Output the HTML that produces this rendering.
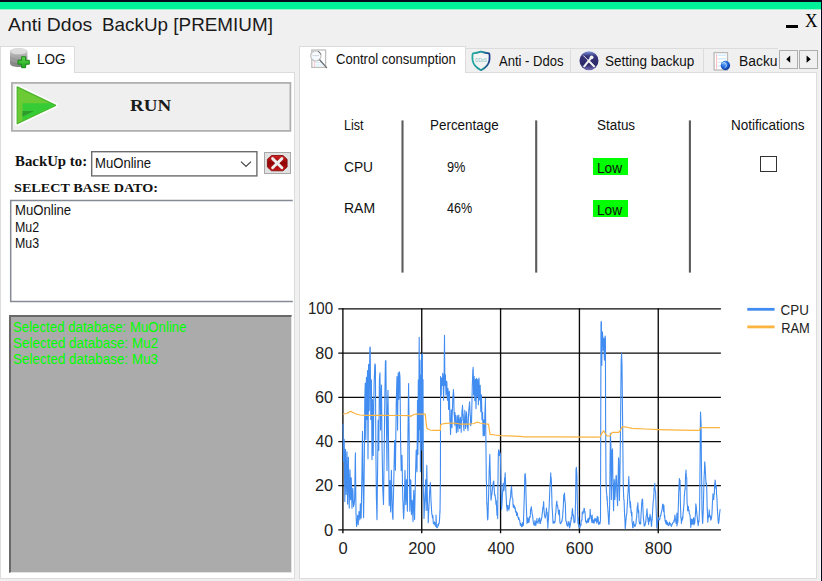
<!DOCTYPE html>
<html><head><meta charset="utf-8"><title>Anti Ddos BackUp [PREMIUM]</title>
<style>
html,body{margin:0;padding:0}
body{width:822px;height:581px;overflow:hidden;background:#f0f0f0;position:relative;font-family:"Liberation Sans",sans-serif}
.a{position:absolute;box-sizing:border-box}
.t{position:absolute;white-space:pre}
svg{position:absolute;overflow:visible}
</style></head><body>

<div class="a" style="left:0;top:0;width:822px;height:2px;background:#06061c"></div>
<div class="a" style="left:0;top:2px;width:821px;height:7px;background:#00f298"></div>
<div class="a" style="left:0;top:9px;width:821px;height:1px;background:#9df2d0"></div>
<div class="a" style="left:0;top:10px;width:821px;height:1px;background:#f5f0f1"></div>
<div class="a" style="left:820px;top:10px;width:1px;height:571px;background:#f9f9f9"></div>
<div class="a" style="left:821px;top:0;width:1px;height:581px;background:#06061c"></div>
<div class="t" style="left:7.56px;top:15.42px;font:normal 19px/1 'Liberation Sans',sans-serif;color:#1a1a1a;transform-origin:0 0;transform:scaleX(1.0215);">Anti Ddos</div>
<div class="t" style="left:101.85px;top:15.42px;font:normal 19px/1 'Liberation Sans',sans-serif;color:#1a1a1a;transform-origin:0 0;transform:scaleX(0.9930);">BackUp [PREMIUM]</div>
<div class="a" style="left:786px;top:24.6px;width:12px;height:3.2px;background:#000"></div>
<div class="t" style="left:805.02px;top:12.11px;font:normal 18.5px/1 'Liberation Serif',serif;color:#000;transform-origin:0 0;transform:scaleX(0.9352);">X</div>
<div class="a" style="left:0;top:72px;width:295px;height:507px;background:#fff;border:1px solid #dcdcdc"></div>
<div class="a" style="left:0;top:46px;width:75px;height:27px;background:#fff;border:1px solid #dcdcdc;border-bottom:none"></div>
<svg style="left:8px;top:46px" width="24" height="24" viewBox="8 46 24 24">
<defs><linearGradient id="dbg" x1="0" y1="0" x2="0" y2="1"><stop offset="0" stop-color="#d6d6d6"/><stop offset="0.4" stop-color="#adadad"/><stop offset="1" stop-color="#808080"/></linearGradient>
<linearGradient id="plg" x1="0" y1="0" x2="0" y2="1"><stop offset="0" stop-color="#5fd44a"/><stop offset="1" stop-color="#1fa81f"/></linearGradient></defs>
<path d="M10 51.5 C10 46.8 27.4 46.8 27.4 51.5 L27.4 63.5 C27.4 68.2 10 68.2 10 63.5 Z" fill="url(#dbg)"/>
<ellipse cx="18.7" cy="51.3" rx="8.1" ry="3" fill="#e2e2e2" opacity=".85"/>
<path d="M10 57 C12 60.5 25 60.5 27.4 57" fill="none" stroke="#8f8f8f" stroke-width="1" opacity=".7"/>
<path d="M10 61.3 C12 64.8 25 64.8 27.4 61.3" fill="none" stroke="#7c7c7c" stroke-width="1" opacity=".7"/>
<path d="M21.6 56.7 h4 v3.6 h3.7 v3.9 h-3.7 v3.5 h-4 v-3.5 h-3.6 v-3.9 h3.6 Z" fill="url(#plg)" stroke="#1c8a1c" stroke-width="1" stroke-linejoin="round"/>
</svg>
<div class="t" style="left:37.39px;top:52.15px;font:normal 14px/1 'Liberation Sans',sans-serif;color:#111;transform-origin:0 0;transform:scaleX(0.9682);">LOG</div>
<svg style="left:9px;top:80px" width="285" height="54" viewBox="9 80 285 54"><rect x="11.9" y="82.9" width="278.5" height="48" fill="#efefef" stroke="#adadad" stroke-width="1.7"/></svg>
<svg style="left:12px;top:83px" width="50" height="46" viewBox="12 83 50 46">
<path d="M17.2 86.9 L55.7 105.4 L17.2 123.8 Z" fill="none" stroke="#fff" stroke-width="4.5" stroke-linejoin="round"/>
<path d="M17.2 86.9 L55.7 105.4 L17.2 123.8 Z" fill="#6ccb35" stroke="#4bb42c" stroke-width="1.2" stroke-linejoin="round"/>
<path d="M22.5 103.2 L51 103.2 L55 105.4 L22.5 120.5 Z" fill="#36cc36"/>
<path d="M22.5 111 L34 111 L22.5 116.8 Z" fill="#2d9c2d"/>
</svg>
<div class="t" style="left:129.68px;top:97.34px;font:bold 17.5px/1 'Liberation Serif',serif;color:#1a1a1a;transform-origin:0 0;transform:scaleX(1.0861);">RUN</div>
<div class="t" style="left:14.55px;top:153.86px;font:bold 14.5px/1 'Liberation Serif',serif;color:#111;transform-origin:0 0;transform:scaleX(1.0225);">BackUp to:</div>
<svg style="left:89px;top:149px" width="171" height="30" viewBox="89 149 171 30"><rect x="91.7" y="151.7" width="165.2" height="24.2" fill="#fff" stroke="#6c6c6c" stroke-width="1.4"/></svg>
<div class="t" style="left:94.63px;top:155.55px;font:normal 14px/1 'Liberation Sans',sans-serif;color:#111;transform-origin:0 0;transform:scaleX(0.9354);">MuOnline</div>
<svg style="left:238px;top:158px" width="16" height="12" viewBox="238 158 16 12"><path d="M241 161.6 L246 166.4 L251 161.6" fill="none" stroke="#4a4a4a" stroke-width="1.3"/></svg>
<div class="a" style="left:264px;top:152.3px;width:27px;height:21.6px;background:#e1e1e1;border:1.2px solid #a8a8a8"></div>
<svg style="left:266px;top:154px" width="23" height="18" viewBox="266 154 23 18">
<defs><linearGradient id="rdg" x1="0" y1="0" x2="0" y2="1"><stop offset="0" stop-color="#d42222"/><stop offset="0.5" stop-color="#8e0404"/><stop offset="1" stop-color="#c81616"/></linearGradient></defs>
<path d="M271.5 155.5 H283 L287.1 159.3 V167 L283 170.8 H271.5 L267.4 167 V159.3 Z" fill="url(#rdg)" stroke="#7a0606" stroke-width=".8"/>
<path d="M272.6 158.6 L281.9 167.7 M281.9 158.6 L272.6 167.7" stroke="#ededed" stroke-width="2.9" stroke-linecap="round"/>
</svg>
<div class="t" style="left:14.05px;top:181.08px;font:bold 13.4px/1 'Liberation Serif',serif;color:#111;transform-origin:0 0;transform:scaleX(1.0575);">SELECT BASE DATO:</div>
<svg style="left:8px;top:198px" width="286" height="106" viewBox="8 198 286 106"><path d="M292.8 200.4 H10.7 V301.5 H292.8" fill="none" stroke="#858b94" stroke-width="1.5"/></svg>
<div class="t" style="left:14.52px;top:203.35px;font:normal 14px/1 'Liberation Sans',sans-serif;color:#111;transform-origin:0 0;transform:scaleX(0.9371);">MuOnline</div>
<div class="t" style="left:14.58px;top:219.65px;font:normal 14px/1 'Liberation Sans',sans-serif;color:#111;transform-origin:0 0;transform:scaleX(0.8865);">Mu2</div>
<div class="t" style="left:14.59px;top:235.95px;font:normal 14px/1 'Liberation Sans',sans-serif;color:#111;transform-origin:0 0;transform:scaleX(0.8835);">Mu3</div>
<div class="a" style="left:9px;top:315px;width:283px;height:258px;background:#ababab;border-left:2px solid #696969;border-top:2px solid #696969;border-right:1px solid #e3e3e3;border-bottom:1px solid #e3e3e3"></div>
<div class="t" style="left:13.00px;top:319.55px;font:normal 14px/1 'Liberation Sans',sans-serif;color:#0f0;transform-origin:0 0;transform:scaleX(0.9450);">Selected database: MuOnline</div>
<div class="t" style="left:12.99px;top:335.75px;font:normal 14px/1 'Liberation Sans',sans-serif;color:#0f0;transform-origin:0 0;transform:scaleX(0.9615);">Selected database: Mu2</div>
<div class="t" style="left:12.99px;top:351.95px;font:normal 14px/1 'Liberation Sans',sans-serif;color:#0f0;transform-origin:0 0;transform:scaleX(0.9610);">Selected database: Mu3</div>
<div class="a" style="left:299px;top:72px;width:518px;height:507px;background:#fff;border:1px solid #dcdcdc"></div>
<div class="a" style="left:465px;top:48px;width:106px;height:24px;border:1px solid #dcdcdc;border-bottom:none"></div>
<div class="a" style="left:570px;top:48px;width:134px;height:24px;border:1px solid #dcdcdc;border-bottom:none"></div>
<div class="a" style="left:703px;top:48px;width:74.5px;height:24px;border:1px solid #dcdcdc;border-bottom:none;border-right:none"></div>
<div class="a" style="left:299px;top:46px;width:167px;height:27px;background:#fff;border:1px solid #dcdcdc;border-bottom:none"></div>
<svg style="left:308px;top:47px" width="22" height="24" viewBox="308 47 22 24">
<rect x="311.8" y="50" width="13.8" height="17.4" fill="#fff" stroke="#bdbdbd" stroke-width="1.3"/>
<path d="M314.3 51 V67" stroke="#ffb9b9" stroke-width=".8"/>
<path d="M315 62.6 H323 M315 65 H323" stroke="#d3ebfb" stroke-width="1.2"/>
<circle cx="315.8" cy="55.9" r="5.1" fill="#f4faff" stroke="#c2c2c2" stroke-width="1.2"/>
<path d="M312.5 55.6 H319" stroke="#d6d6d6" stroke-width="1"/>
<path d="M319.8 60 L326.6 67.6" stroke="#6e6e6e" stroke-width="1.3" stroke-linecap="round"/>
<path d="M318.2 51.4 C319.6 52.2 320.4 53.2 320.9 54.4" fill="none" stroke="#666" stroke-width="1"/>
</svg>
<div class="t" style="left:335.93px;top:51.65px;font:normal 14px/1 'Liberation Sans',sans-serif;color:#111;transform-origin:0 0;transform:scaleX(0.9332);">Control consumption</div>
<svg style="left:469px;top:49px" width="24" height="24" viewBox="469 49 24 24">
<defs><linearGradient id="shg" x1="0" y1="0" x2="1" y2="0"><stop offset="0" stop-color="#22a9a2"/><stop offset="0.55" stop-color="#1f8f98"/><stop offset="1" stop-color="#1d3d8c"/></linearGradient></defs>
<path d="M481 51.6 C478 52.6 475.6 53.1 473 53.3 C472.4 54.2 472.4 58 472.6 60.2 C473.2 65 477 68.3 481 70.2 C485 68.3 488.8 65 489.4 60.2 C489.6 58 489.6 54.2 489 53.3 C486.4 53.1 484 52.6 481 51.6 Z" fill="#f2f3f3" stroke="url(#shg)" stroke-width="1.8" stroke-linejoin="round"/>
<text x="475.3" y="61.8" font-family="Liberation Sans, sans-serif" font-size="4.6" fill="#7fc1c4" textLength="11.5" lengthAdjust="spacingAndGlyphs">DDoS</text>
</svg>
<div class="t" style="left:498.97px;top:54.35px;font:normal 14px/1 'Liberation Sans',sans-serif;color:#111;transform-origin:0 0;transform:scaleX(0.9314);">Anti - Ddos</div>
<svg style="left:577px;top:49px" width="24" height="24" viewBox="577 49 24 24">
<defs><linearGradient id="stg" x1="0" y1="0" x2="0" y2="1"><stop offset="0" stop-color="#7f97dc"/><stop offset="0.25" stop-color="#38357c"/><stop offset="0.7" stop-color="#2b2868"/><stop offset="1" stop-color="#7a72bd"/></linearGradient></defs>
<circle cx="589" cy="60.8" r="9.5" fill="url(#stg)"/>
<path d="M584.2 66.3 L591.8 57" stroke="#f2f2f2" stroke-width="2" stroke-linecap="round"/>
<circle cx="591.6" cy="57.3" r="1.9" fill="#f2f2f2"/>
<path d="M583.6 55.8 L588.4 60.6" stroke="#e9e9e9" stroke-width="1" stroke-linecap="round"/>
<path d="M588.6 60.8 L594 66.2" stroke="#f2f2f2" stroke-width="2" stroke-linecap="round"/>
</svg>
<div class="t" style="left:605.39px;top:54.35px;font:normal 14px/1 'Liberation Sans',sans-serif;color:#111;transform-origin:0 0;transform:scaleX(0.9627);">Setting backup</div>
<svg style="left:711px;top:50px" width="22" height="24" viewBox="711 50 22 24">
<defs><radialGradient id="glb" cx=".38" cy=".3" r=".8"><stop offset="0" stop-color="#6fb4ff"/><stop offset="0.5" stop-color="#1e62d4"/><stop offset="1" stop-color="#0b2f8c"/></radialGradient></defs>
<rect x="714.1" y="52.6" width="13.4" height="17.4" fill="#fff" stroke="#b9b9b9" stroke-width="1.3"/>
<path d="M716.6 54 V69" stroke="#ffb3b3" stroke-width=".9"/>
<path d="M717.6 55.2 H726 M717.6 58.8 H726 M717.6 62.4 H722 M717.6 66 H721" stroke="#d4ecff" stroke-width="1.4"/>
<circle cx="725.4" cy="65.5" r="4.7" fill="url(#glb)"/>
<path d="M722.4 63.4 C724 62 725.6 62.6 726 64.2 C727 65.6 726 67.4 724.6 67.8" fill="none" stroke="#cfe6ff" stroke-width=".9"/>
</svg>
<div class="a" style="left:739px;top:50px;width:38px;height:20px;overflow:hidden"><div class="t" style="left:-0.34px;top:4.35px;font:normal 14px/1 'Liberation Sans',sans-serif;color:#111;transform-origin:0 0;transform:scaleX(0.9899);">Backup</div></div>
<div class="a" style="left:779px;top:50px;width:18.5px;height:18.5px;background:#f0f0f0;border:1.2px solid #adadad"></div>
<div class="a" style="left:798.5px;top:50px;width:19.5px;height:18.5px;background:#f0f0f0;border:1.2px solid #adadad"></div>
<svg style="left:779px;top:50px" width="40" height="19" viewBox="779 50 40 19"><path d="M790.2 55.6 L786.2 59.2 L790.2 62.8 Z M806.6 55.6 L810.8 59.2 L806.6 62.8 Z" fill="#000"/></svg>
<div class="t" style="left:344.38px;top:117.55px;font:normal 14px/1 'Liberation Sans',sans-serif;color:#111;transform-origin:0 0;transform:scaleX(0.8910);">List</div>
<div class="t" style="left:429.60px;top:117.55px;font:normal 14px/1 'Liberation Sans',sans-serif;color:#111;transform-origin:0 0;transform:scaleX(0.9593);">Percentage</div>
<div class="t" style="left:597.00px;top:117.55px;font:normal 14px/1 'Liberation Sans',sans-serif;color:#111;transform-origin:0 0;transform:scaleX(0.9596);">Status</div>
<div class="t" style="left:731.29px;top:117.55px;font:normal 14px/1 'Liberation Sans',sans-serif;color:#111;transform-origin:0 0;transform:scaleX(0.9651);">Notifications</div>
<svg style="left:395px;top:118px" width="300" height="158" viewBox="395 118 300 158"><rect x="401.45" y="120.4" width="2.1" height="152.2" fill="#5c5c5c"/><rect x="535.15" y="120.4" width="2.1" height="152.2" fill="#5c5c5c"/><rect x="688.85" y="120.4" width="2.1" height="152.2" fill="#5c5c5c"/></svg>
<div class="t" style="left:343.70px;top:158.88px;font:normal 15.5px/1 'Liberation Sans',sans-serif;color:#111;transform-origin:0 0;transform:scaleX(0.8882);">CPU</div>
<div class="t" style="left:344.05px;top:200.08px;font:normal 15.5px/1 'Liberation Sans',sans-serif;color:#111;transform-origin:0 0;transform:scaleX(0.9028);">RAM</div>
<div class="t" style="left:446.60px;top:158.88px;font:normal 15.5px/1 'Liberation Sans',sans-serif;color:#111;transform-origin:0 0;transform:scaleX(0.8236);">9%</div>
<div class="t" style="left:446.91px;top:200.08px;font:normal 15.5px/1 'Liberation Sans',sans-serif;color:#111;transform-origin:0 0;transform:scaleX(0.8102);">46%</div>
<div class="a" style="left:593.4px;top:158.2px;width:34.3px;height:16.4px;background:#0f0"></div>
<div class="a" style="left:593.4px;top:200.4px;width:34.3px;height:16.4px;background:#0f0"></div>
<div class="t" style="left:596.88px;top:160.75px;font:normal 14px/1 'Liberation Sans',sans-serif;color:#111;transform-origin:0 0;transform:scaleX(0.9768);">Low</div>
<div class="t" style="left:596.88px;top:202.95px;font:normal 14px/1 'Liberation Sans',sans-serif;color:#111;transform-origin:0 0;transform:scaleX(0.9768);">Low</div>
<div class="a" style="left:760.2px;top:155.6px;width:17.3px;height:16.6px;background:#fff;border:1.3px solid #333"></div>
<svg style="left:300px;top:295px" width="521" height="284" viewBox="300 295 521 284" font-family="Liberation Sans, sans-serif">
<path d="M338.3 529.95 H720.9" stroke="#0a0a0a" stroke-width="1.25"/>
<path d="M338.3 485.73 H720.9" stroke="#0a0a0a" stroke-width="1.25"/>
<path d="M338.3 441.51 H720.9" stroke="#0a0a0a" stroke-width="1.25"/>
<path d="M338.3 397.29 H720.9" stroke="#0a0a0a" stroke-width="1.25"/>
<path d="M338.3 353.07 H720.9" stroke="#0a0a0a" stroke-width="1.25"/>
<path d="M338.3 308.85 H720.9" stroke="#0a0a0a" stroke-width="1.25"/>
<path d="M342.90 308.2 V533.2" stroke="#0a0a0a" stroke-width="1.35"/>
<path d="M421.74 308.2 V533.2" stroke="#0a0a0a" stroke-width="1.35"/>
<path d="M500.58 308.2 V533.2" stroke="#0a0a0a" stroke-width="1.35"/>
<path d="M579.42 308.2 V533.2" stroke="#0a0a0a" stroke-width="1.35"/>
<path d="M658.26 308.2 V533.2" stroke="#0a0a0a" stroke-width="1.35"/>
<polyline fill="none" stroke="#418cf0" stroke-width="1.1" stroke-linejoin="round" points="343,423.8 343.39,450.3 343.6,461.4 343.79,454.6 344.18,442.2 344.2,439.4 344.58,478.6 344.8,501.5 344.97,490.3 345.37,459.5 345.5,449.2 345.76,461.4 346.15,493.3 346.2,494.4 346.55,473.0 346.94,455.6 347,451.7 347.34,478.6 347.6,504.1 347.73,495.6 348.12,472.9 348.4,457.4 348.52,467.0 348.91,489.8 349.2,508.1 349.31,502.6 349.7,482.8 350,469.7 350.1,474.8 350.49,492.1 350.6,499.7 350.88,481.8 351.2,477.9 351.28,478.7 351.67,494.6 352,508.2 352.07,504.8 352.46,493.1 352.8,488.3 352.86,489.3 353.25,500.6 353.5,506.6 353.64,505.8 354.04,505.0 354.43,501.4 354.6,500.4 354.83,487.1 355.22,461.6 355.4,452.9 355.61,475.0 356,514.4 356.01,512.7 356.4,523.0 356.6,526.5 356.8,525.5 357.19,521.5 357.5,518.4 357.59,515.4 357.98,521.7 358.3,524.5 358.37,516.6 358.77,516.5 359,511.6 359.16,514.0 359.56,517.3 359.8,519.9 359.95,517.5 360.34,503.8 360.5,505.0 360.74,509.0 361.13,518.2 361.2,517.4 361.53,495.4 361.92,475.0 362,469.5 362.32,444.0 362.5,431.4 362.71,452.4 363,479.8 363.1,486.6 363.5,511.9 363.6,517.8 363.89,497.2 364.2,470.2 364.29,460.2 364.68,414.3 364.8,399.5 365.08,389.1 365.3,383.0 365.47,401.5 365.8,439.5 365.86,433.9 366.26,389.4 366.4,377.4 366.65,390.5 367,419.5 367.05,413.7 367.44,377.1 367.5,370.5 367.83,427.1 368,458.8 368.23,424.8 368.6,365.0 368.62,364.4 369.02,398.3 369.2,410.6 369.41,387.1 369.8,350.4 369.81,347.9 370.2,347.0 370.59,394.0 370.8,419.4 370.99,407.6 371.38,381.4 371.4,379.9 371.78,426.7 372,459.6 372.17,442.2 372.56,404.2 372.6,399.6 372.96,433.4 373.2,455.4 373.35,443.3 373.75,407.4 374,390.2 374.14,382.8 374.54,372.3 374.8,365.6 374.93,363.8 375.32,365.2 375.4,365.9 375.72,426.7 375.8,440.3 376.11,471.3 376.4,499.5 376.51,500.6 376.9,517.9 377,519.6 377.3,493.4 377.6,470.1 377.69,462.6 378.08,424.2 378.2,420.0 378.48,429.5 378.8,450.5 378.87,438.9 379.27,395.6 379.4,379.7 379.66,376.0 380,372.9 380.05,380.0 380.45,416.3 380.6,430.1 380.84,408.2 381,400.6 381.24,392.9 381.5,385.0 381.63,400.7 382,439.6 382.03,444.2 382.42,467.4 382.8,490.3 382.81,489.6 383.21,498.3 383.5,504.4 383.6,497.8 384.0,465.9 384.2,450.4 384.39,434.4 384.79,400.3 384.8,399.9 385.18,375.5 385.4,362.0 385.57,360.5 385.9,361.0 385.97,370.5 386.36,415.1 386.4,420.6 386.76,451.1 387,470.6 387.15,448.7 387.5,409.5 387.54,407.7 387.94,392.4 388,390.2 388.33,422.2 388.6,449.5 388.73,461.1 389.12,499.8 389.2,505.6 389.52,497.1 389.91,483.3 390,480.6 390.3,492.9 390.6,511.9 390.7,506.4 391.09,487.0 391.4,470.3 391.49,476.2 391.88,493.2 392.2,509.8 392.27,510.3 392.67,517.9 393,519.4 393.06,508.9 393.46,496.4 393.8,480.4 393.85,477.5 394.25,458.9 394.6,440.4 394.64,441.6 395.03,452.4 395.4,470.3 395.43,468.1 395.82,437.4 396.2,409.4 396.22,404.9 396.61,389.6 397,376.5 397.01,379.2 397.4,411.9 397.6,430.1 397.79,407.2 398.19,375.3 398.2,372.7 398.58,390.6 398.8,399.4 398.98,392.3 399.37,374.8 399.4,371.7 399.76,374.9 400,377.8 400.16,395.5 400.55,437.0 400.6,440.1 400.95,458.6 401.2,470.6 401.34,469.5 401.74,460.2 402,455.4 402.13,462.8 402.52,484.4 402.8,499.8 402.92,501.0 403.31,511.3 403.6,518.8 403.71,517.0 404.1,509.1 404.4,499.7 404.5,495.2 404.89,473.9 405,470.2 405.28,482.5 405.68,500.5 405.8,504.5 406.07,496.3 406.47,479.6 406.6,480.1 406.86,492.5 407.25,506.4 407.4,511.3 407.65,478.3 408,430.0 408.04,428.1 408.44,397.3 408.6,383.5 408.83,404.8 409.2,439.4 409.23,443.7 409.62,489.4 409.8,511.3 410.01,502.6 410.41,484.0 410.6,479.8 410.8,480.3 411.2,505.4 411.4,514.4 411.59,510.0 411.99,503.9 412.2,500.4 412.38,506.1 412.77,515.8 413,521.4 413.17,512.4 413.56,496.4 413.8,490.3 413.96,495.9 414.35,511.6 414.6,519.5 414.74,510.8 415.14,492.7 415.4,480.2 415.53,474.1 415.93,458.8 416.2,450.0 416.32,453.6 416.72,466.3 417,471.7 417.11,457.0 417.5,400.3 417.9,454.6 418.29,381.7 418.3,380.0 418.69,439.0 418.7,440.2 419.08,360.4 419.2,337.2 419.47,400.4 419.6,429.7 419.87,380.9 420,360.1 420.26,433.3 420.4,471.7 420.66,408.6 420.8,375.2 421.05,422.8 421.2,450.0 421.45,389.3 421.6,354.5 421.84,407.9 422,440.6 422.23,374.8 422.3,353.4 422.63,426.9 422.7,449.7 423,379.6 423.02,380.0 423.4,490.1 423.42,492.3 423.81,503.1 424,518.4 424.21,514.2 424.6,502.8 424.8,500.5 424.99,494.2 425.39,486.8 425.6,479.9 425.78,488.9 426.18,509.2 426.2,510.4 426.57,484.4 426.8,465.4 426.96,476.7 427.36,497.5 427.4,499.7 427.75,510.4 428.15,508.6 428.2,522.8 428.54,515.2 428.94,506.9 429,505.4 429.33,499.8 429.7,489.7 429.72,490.7 430.12,485.2 430.3,482.6 430.51,485.0 430.91,498.1 431,500.6 431.3,504.9 431.69,512.4 432,514.9 432.09,514.5 432.48,517.9 432.88,515.6 433.27,523.0 433.4,523.7 433.67,523.3 434.06,524.1 434.45,523.0 434.5,521.9 434.85,523.3 435.24,526.0 435.64,524.5 436,526.5 436.03,515.1 436.43,526.8 436.82,527.6 437.21,527.6 437.4,526.7 437.61,527.3 438.0,524.3 438.4,525.7 438.5,524.8 438.79,523.2 439.18,523.6 439.5,519.5 439.58,519.3 439.97,510.0 440,512.7 440.37,483.2 440.4,479.9 440.6,376.6 440.76,379.4 441.16,394.2 441.2,395.3 441.55,381.6 441.8,378.1 441.94,381.0 442.34,380.9 442.4,385.5 442.73,373.2 443,375.5 443.13,382.5 443.52,396.9 443.6,400.3 443.92,387.1 444.1,379.9 444.31,355.1 444.5,335.4 444.7,362.0 444.9,385.2 445.1,380.9 445.4,374.7 445.49,377.9 445.89,391.6 446,395.0 446.28,386.0 446.4,382.6 446.67,381.4 446.9,382.7 447.07,390.1 447.4,400.2 447.46,395.6 447.86,391.2 448,388.6 448.25,395.6 448.6,409.4 448.65,409.1 449.04,397.9 449.3,391.2 449.43,392.5 449.83,417.8 449.9,419.9 450.22,424.8 450.6,434.4 450.62,431.9 451.01,419.8 451.2,409.8 451.4,411.7 451.8,425.2 452,427.7 452.19,415.3 452.59,404.9 452.7,399.9 452.98,396.3 453.38,391.3 453.4,389.6 453.77,395.0 454,409.4 454.16,414.2 454.56,418.0 454.8,425.3 454.95,412.6 455.35,418.1 455.6,415.6 455.74,415.6 456.14,426.1 456.4,432.8 456.53,430.8 456.92,425.6 457.2,419.8 457.32,415.6 457.71,421.2 458,431.8 458.11,428.2 458.5,420.6 458.8,415.0 458.89,418.0 459.29,423.8 459.6,428.5 459.68,428.3 460.08,420.6 460.4,417.4 460.47,419.7 460.87,421.7 461.2,432.3 461.26,426.5 461.65,421.6 462,410.2 462.05,411.1 462.44,406.7 462.5,405.3 462.84,412.3 463.2,420.2 463.23,414.5 463.63,426.3 464,430.6 464.02,424.2 464.41,423.1 464.8,415.0 464.81,410.2 465.2,420.1 465.6,428.4 465.99,418.8 466.38,412.7 466.4,411.8 466.78,415.4 467.17,426.2 467.2,424.7 467.57,427.6 467.96,429.2 468,430.6 468.36,419.0 468.75,411.2 468.8,409.5 469.14,407.2 469.54,402.3 469.6,401.9 469.93,409.0 470.2,415.3 470.33,415.0 470.72,425.8 470.8,424.7 471.12,423.5 471.5,423.3 471.51,423.0 471.9,404.3 472.2,390.5 472.3,386.0 472.69,375.3 472.8,370.0 473.09,368.9 473.1,367.2 473.48,378.6 473.6,395.0 473.87,385.1 474.2,376.5 474.27,379.8 474.66,395.0 474.8,400.6 475.06,392.0 475.4,379.8 475.45,379.4 475.85,402.6 476,408.6 476.24,397.6 476.6,378.2 476.63,379.7 477.03,392.2 477.2,396.7 477.42,390.7 477.8,379.6 477.82,382.0 478.21,395.4 478.4,404.8 478.6,397.8 479,378.1 479.39,392.8 479.6,399.9 479.79,395.4 480.18,386.1 480.2,385.3 480.58,402.0 480.8,411.7 480.97,401.6 481.36,395.6 481.4,394.9 481.76,408.4 482,419.8 482.15,419.7 482.55,412.6 482.6,412.5 482.94,426.8 483.2,435.9 483.34,429.1 483.73,421.9 483.8,420.1 484.12,428.9 484.4,435.5 484.52,429.9 484.91,413.1 485,409.7 485.31,402.5 485.4,398.5 485.7,424.4 485.9,440.6 486.09,459.2 486.3,480.6 486.49,482.9 486.8,504.4 486.88,502.2 487.28,511.3 487.4,517.4 487.67,520.0 487.9,518.6 488.07,514.9 488.46,498.2 488.5,499.6 488.85,485.5 489.2,469.8 489.25,469.5 489.64,458.7 489.8,454.4 490.04,465.4 490.4,479.4 490.43,477.7 490.82,493.7 491,500.2 491.22,498.8 491.6,495.1 491.61,495.7 492.01,492.6 492.4,489.4 492.8,486.0 493.1,483.7 493.19,482.7 493.58,481.4 493.8,481.0 493.98,485.1 494.37,491.8 494.5,494.9 494.77,494.6 495.16,495.0 495.3,497.3 495.56,497.6 495.95,504.3 496.2,504.8 496.34,500.8 496.74,510.3 497,515.3 497.13,512.7 497.53,510.0 497.7,518.6 497.92,486.9 498.1,470.4 498.31,454.7 498.5,450.8 498.71,449.9 499.1,450.5 499.2,455.4 499.5,454.8 499.8,452.6 499.89,452.8 500.29,453.2 500.4,453.4 500.68,468.9 500.9,480.6 501.07,487.3 501.47,506.3 501.6,509.5 501.86,505.4 502.26,499.1 502.4,495.1 502.65,491.9 503.05,487.8 503.2,483.2 503.44,486.3 503.83,490.6 504,490.1 504.23,486.7 504.6,477.9 504.62,479.6 505.02,476.8 505.2,472.7 505.41,479.5 505.8,490.1 506.2,497.3 506.5,504.3 506.59,506.5 506.99,508.5 507.2,511.0 507.38,505.6 507.78,508.8 508,505.4 508.17,507.8 508.56,508.7 508.96,510.1 509,509.1 509.35,507.2 509.75,501.6 510,500.6 510.14,499.0 510.53,497.5 510.93,490.3 511,491.9 511.32,487.9 511.5,486.2 511.72,489.4 512,495.2 512.11,497.5 512.51,498.2 512.9,499.4 513,505.0 513.29,506.6 513.5,507.4 513.69,504.7 514.08,507.7 514.48,506.6 514.5,506.1 514.87,508.6 515.27,507.7 515.5,511.7 515.66,512.2 516.05,511.1 516.45,512.5 516.5,515.5 516.84,513.2 517.24,512.8 517.5,513.6 517.63,515.4 518.02,517.7 518.42,517.6 518.5,519.5 518.81,517.6 519.21,519.4 519.5,520.4 519.6,519.8 520.0,522.5 520.39,525.5 520.5,523.4 520.78,524.6 521.18,524.4 521.5,525.3 521.57,526.7 521.97,525.6 522.36,522.5 522.5,526.3 522.76,525.8 523.15,525.7 523.5,524.3 523.54,519.8 523.94,507.8 524.2,499.7 524.33,496.0 524.73,480.3 524.8,474.5 525.12,474.0 525.2,473.6 525.51,477.2 525.7,479.4 525.91,490.7 526.3,505.2 526.7,515.4 527,523.4 527.09,523.1 527.49,521.6 527.88,517.9 528,522.5 528.27,518.7 528.67,521.3 529,519.5 529.06,522.2 529.46,517.3 529.85,516.4 530,517.7 530.25,515.9 530.64,509.4 530.8,509.8 531.03,508.1 531.4,506.7 531.43,508.6 531.82,510.7 532,512.6 532.22,514.7 532.61,515.2 533,519.9 533.4,522.6 533.79,524.3 534,524.1 534.19,525.4 534.58,524.4 534.98,521.1 535,520.6 535.37,522.1 535.76,525.6 536,525.0 536.16,521.7 536.55,522.5 536.95,518.3 537,521.6 537.34,522.2 537.73,522.1 538,523.5 538.13,521.8 538.52,520.6 538.92,518.8 539,519.8 539.31,521.1 539.71,517.9 540,523.5 540.1,523.5 540.49,523.4 540.89,520.1 541,520.5 541.28,519.8 541.68,517.8 542,516.3 542.07,514.4 542.47,512.1 542.86,507.0 543,508.3 543.25,506.5 543.6,502.4 543.65,501.6 544.04,510.5 544.2,511.7 544.44,514.5 544.83,516.5 545,517.5 545.22,518.0 545.62,516.9 546,514.6 546.01,515.0 546.41,508.0 546.8,512.5 547.2,512.4 547.4,521.8 547.59,518.1 547.8,528.3 547.98,525.2 548.38,518.7 548.4,519.6 548.77,512.5 549.17,506.7 549.2,505.3 549.56,496.4 549.95,485.6 550,485.1 550.35,482.1 550.74,472.9 550.8,476.1 551.14,477.8 551.4,481.6 551.53,486.7 551.93,501.1 552,505.5 552.32,509.9 552.71,516.9 553,522.2 553.11,523.3 553.5,521.3 553.9,521.7 554,522.9 554.29,523.0 554.69,522.5 555,521.6 555.08,521.6 555.47,513.8 555.87,512.7 556,509.4 556.26,506.1 556.66,501.9 556.8,501.0 557.05,504.6 557.4,506.1 557.44,505.0 557.84,507.6 558,508.0 558.23,511.1 558.63,513.9 559,514.9 559.02,512.7 559.42,510.0 559.81,521.6 560,521.9 560.2,523.6 560.6,523.5 560.99,523.1 561,522.6 561.39,521.9 561.78,520.7 562,521.4 562.18,519.2 562.57,517.8 562.96,510.6 563,512.0 563.36,505.7 563.75,494.7 563.8,500.2 564.15,495.1 564.5,493.0 564.54,494.5 564.93,501.2 565.2,502.8 565.33,503.5 565.72,517.7 565.8,519.9 566.12,521.6 566.51,521.8 566.6,523.7 566.91,525.2 567.3,525.7 567.69,524.5 568,526.6 568.09,522.1 568.48,523.7 568.88,521.6 569,524.4 569.27,522.8 569.66,528.0 570,526.2 570.06,525.8 570.45,524.8 570.85,520.5 571,521.5 571.24,517.2 571.64,519.0 572,514.1 572.03,512.5 572.42,508.6 572.6,510.4 572.82,513.8 573.2,516.0 573.21,514.6 573.61,516.6 574,522.7 574.4,522.7 574.79,521.3 575,522.0 575.18,516.6 575.58,500.9 575.6,500.5 575.97,474.7 576,470.0 576.37,467.4 576.4,467.4 576.76,473.1 576.9,475.6 577.15,491.3 577.5,510.2 577.55,513.2 577.94,522.4 578,523.8 578.34,517.5 578.73,526.6 579,525.4 579.13,525.2 579.52,528.1 579.91,527.4 580,527.0 580.31,524.0 580.7,525.8 581,525.1 581.1,521.7 581.49,520.0 581.89,520.1 582,520.0 582.28,511.9 582.67,513.1 583,512.8 583.07,513.7 583.46,510.8 583.86,510.7 584,508.5 584.25,508.3 584.64,511.6 584.8,512.6 585.04,511.7 585.43,519.2 585.6,521.5 585.83,521.3 586.22,522.3 586.5,523.1 586.62,521.3 587.01,521.7 587.4,519.9 587.8,522.2 588,522.4 588.19,518.2 588.59,522.2 588.98,518.4 589,519.7 589.38,518.7 589.77,516.7 590,515.2 590.16,509.2 590.4,514.1 590.56,515.7 590.95,515.8 591,518.6 591.35,518.5 591.74,521.7 592,522.6 592.13,515.0 592.53,522.0 592.92,521.6 593,522.5 593.32,522.7 593.71,519.7 594,521.6 594.11,523.2 594.5,520.6 594.89,518.3 595,520.3 595.29,520.4 595.68,519.5 596,521.5 596.08,518.8 596.47,521.4 596.86,523.1 597,521.7 597.26,516.3 597.65,521.1 598,520.2 598.05,517.0 598.44,522.7 598.84,524.6 599,523.0 599.23,523.9 599.62,522.0 600,522.2 600.02,523.8 600.41,520.5 600.5,519.2 600.8,399.9 600.81,397.4 601,323.6 601.2,321.4 601.4,322.7 601.6,346.6 601.8,365.3 601.99,349.5 602.2,338.1 602.38,331.8 602.78,336.2 602.8,336.9 603.17,345.5 603.2,350.2 603.57,343.1 603.8,338.4 603.96,343.5 604.35,358.9 604.4,360.1 604.75,346.0 605,337.4 605.14,336.1 605.4,337.5 605.54,394.3 605.6,420.5 605.93,467.9 606,480.5 606.33,489.6 606.4,492.1 606.72,493.6 607,500.3 607.11,496.2 607.51,505.1 607.8,508.0 607.9,510.2 608.3,515.8 608.5,519.9 608.69,523.7 609,524.4 609.09,523.1 609.48,510.3 609.6,510.0 609.87,483.4 610,469.6 610.27,445.4 610.4,433.3 610.66,440.0 610.9,444.9 611.06,461.8 611.4,499.4 611.45,484.2 611.84,465.0 612,450.4 612.24,451.0 612.5,448.8 612.63,458.5 613,489.4 613.03,483.3 613.42,505.0 613.6,510.7 613.82,497.7 614.2,480.6 614.21,479.5 614.6,487.1 614.8,499.4 615.0,496.6 615.39,489.3 615.6,485.1 615.79,480.1 616.18,475.3 616.4,476.4 616.57,481.4 616.97,496.5 617,494.7 617.36,501.1 617.6,505.6 617.76,495.9 618.15,477.0 618.2,475.6 618.55,457.8 618.8,461.4 618.94,471.5 619.33,493.0 619.4,500.4 619.73,485.7 620,470.3 620.12,460.5 620.52,427.3 620.6,420.3 620.91,384.9 621.2,359.7 621.31,358.6 621.6,353.5 621.7,356.9 622,364.5 622.09,372.6 622.49,410.1 622.6,420.2 622.88,450.1 623.2,479.6 623.28,485.1 623.67,497.0 623.8,499.5 624.06,500.1 624.46,511.5 624.6,515.6 624.85,518.3 625.2,527.9 625.25,528.8 625.64,524.1 626,519.5 626.04,519.6 626.43,514.7 626.82,513.9 627,509.7 627.22,505.5 627.61,500.3 627.8,494.8 628.01,492.5 628.4,486.2 628.6,480.5 628.8,476.6 629.19,488.4 629.4,494.6 629.58,497.6 629.98,504.7 630.2,507.8 630.37,501.5 630.77,506.5 631,512.7 631.16,509.8 631.55,515.7 631.95,512.6 632,521.4 632.34,522.9 632.74,527.8 633,527.0 633.13,527.7 633.53,521.5 633.92,524.0 634,524.6 634.31,524.5 634.71,526.5 635,526.5 635.1,526.1 635.5,525.2 635.89,523.5 636,523.4 636.28,518.9 636.68,517.5 637,511.9 637.07,509.1 637.47,505.4 637.8,505.5 637.86,502.8 638.26,512.2 638.6,513.0 638.65,510.1 639.04,520.3 639.44,523.1 639.5,523.8 639.83,522.4 640.23,523.9 640.5,524.0 640.62,524.0 641.02,514.7 641.4,509.8 641.41,508.4 641.8,502.0 642.2,499.5 642.59,499.2 642.99,510.0 643,510.0 643.38,518.0 643.77,521.1 644,523.5 644.17,526.1 644.56,525.7 644.96,524.1 645,525.4 645.35,523.7 645.75,522.0 646,519.5 646.14,516.1 646.53,514.8 646.93,509.9 647,508.7 647.32,513.7 647.72,518.6 647.8,518.5 648.11,521.7 648.5,521.0 648.6,524.4 648.9,517.7 649.29,521.8 649.4,520.0 649.69,518.7 650,514.4 650.08,514.7 650.48,518.1 650.8,520.6 650.87,519.8 651.26,524.1 651.4,526.4 651.66,525.8 652.05,516.3 652.2,519.9 652.45,514.4 652.84,506.9 653,504.9 653.24,500.8 653.63,499.2 654,492.4 654.02,487.7 654.42,488.5 654.81,483.2 654.9,487.2 655.21,490.6 655.6,491.7 655.99,504.6 656.2,510.2 656.39,516.4 656.78,527.9 656.8,526.7 657.18,525.8 657.57,523.7 657.6,522.6 657.97,519.8 658.36,518.9 658.5,517.5 658.75,518.9 659.15,519.9 659.5,519.7 659.54,519.8 659.94,518.5 660.33,515.5 660.5,515.2 660.73,515.9 661.12,513.5 661.5,512.1 661.51,511.7 661.91,510.1 662.3,507.4 662.7,504.0 662.8,504.8 663.09,504.2 663.48,510.7 663.6,511.7 663.88,505.3 664.27,514.0 664.5,517.4 664.67,515.5 665.06,520.9 665.46,521.8 665.5,520.5 665.85,523.8 666.24,520.3 666.5,522.8 666.64,524.3 667.03,524.0 667.43,522.1 667.82,524.0 668,525.3 668.21,525.4 668.61,523.7 669.0,525.2 669.4,524.4 669.5,522.1 669.79,524.0 670.19,523.4 670.58,524.0 670.97,525.2 671,525.9 671.37,526.3 671.76,525.6 672.16,524.0 672.5,523.8 672.55,522.9 672.95,522.7 673.34,522.4 673.73,522.2 674,520.1 674.13,521.9 674.52,519.5 674.92,515.0 675,515.6 675.31,519.2 675.7,520.7 676,522.1 676.1,523.5 676.49,522.4 676.89,513.1 677,526.0 677.28,523.1 677.68,522.8 678,519.8 678.07,512.9 678.46,501.7 678.8,489.8 678.86,489.4 679.25,481.6 679.4,478.6 679.65,483.0 680,490.2 680.04,480.3 680.44,504.4 680.8,514.6 680.83,517.4 681.22,519.1 681.4,523.5 681.62,520.3 682.01,520.8 682.41,516.9 682.5,519.5 682.8,517.9 683.19,512.4 683.5,509.6 683.59,508.3 683.98,504.4 684.38,494.6 684.4,495.9 684.77,491.0 685.17,488.1 685.2,489.7 685.56,474.2 685.6,475.2 685.95,471.7 686,470.1 686.35,476.9 686.5,478.0 686.74,477.5 687,499.9 687.14,503.1 687.53,507.2 687.6,510.5 687.92,511.0 688.32,506.4 688.4,508.4 688.71,510.2 689.11,510.4 689.2,513.3 689.5,513.6 689.9,514.7 690,515.5 690.29,519.0 690.68,526.1 690.8,527.4 691.08,523.5 691.47,519.0 691.6,524.2 691.87,523.5 692.26,519.6 692.66,524.2 693,522.4 693.05,523.2 693.44,517.8 693.84,518.9 694,524.9 694.23,522.0 694.63,523.5 695,520.0 695.02,517.3 695.41,515.4 695.6,511.6 695.81,503.8 696.2,506.6 696.3,507.0 696.6,510.7 696.99,515.4 697,515.4 697.39,518.5 697.78,522.6 698,523.7 698.17,525.6 698.57,522.7 698.96,520.0 699,521.7 699.36,511.5 699.6,509.9 699.75,493.4 700,469.6 700.15,452.4 700.4,419.8 700.54,412.0 700.7,416.6 700.93,420.6 701.1,424.9 701.33,452.7 701.5,469.7 701.72,484.4 702,509.8 702.12,513.6 702.51,522.2 702.7,523.5 702.9,518.7 703.3,509.3 703.4,504.8 703.69,492.3 704,479.8 704.09,477.2 704.48,469.7 704.7,461.8 704.88,462.7 705.27,469.1 705.3,470.0 705.66,477.0 706,483.8 706.06,484.2 706.45,483.1 706.6,484.9 706.85,492.4 707.2,510.5 707.24,507.2 707.63,518.4 707.8,522.2 708.03,518.8 708.42,517.4 708.6,515.3 708.82,515.3 709.2,510.8 709.21,509.7 709.61,516.4 710,517.3 710.39,515.9 710.79,520.1 711,519.6 711.18,519.4 711.58,517.4 711.8,515.2 711.97,513.6 712.37,503.9 712.4,502.7 712.76,498.4 713,493.8 713.15,497.7 713.55,496.5 713.7,499.4 713.94,495.2 714.2,494.4 714.34,492.7 714.73,483.6 714.8,485.5 715.12,480.0 715.3,481.3 715.52,484.7 715.9,488.4 715.91,488.0 716.31,485.7 716.5,492.6 716.7,495.3 717.1,501.2 717.2,504.9 717.49,511.7 717.88,516.4 718,518.6 718.28,522.7 718.6,523.4 718.67,523.0 719.07,520.3 719.2,518.6 719.46,514.9 719.86,511.3 720,509.8 720.25,509.7 720.64,509.9"/>
<polyline fill="none" stroke="#fcb441" stroke-width="1.25" stroke-linejoin="round" points="343,414 347,413.5 349,412 350.8,411.4 353,412.5 356,414 360,415 365,415.3 380,415.3 400,415.5 409.7,415.5 410.5,416.6 412,415.5 414,414.5 416,414 420,414 425.3,414 425.8,420 426.8,428 428,429 430,430 433.4,430.4 439.8,430.4 440.4,430 440.6,425 442,424 445.8,423.3 454,423 460,424 470,424 474,423.5 477.5,422 480,423 485.4,424 488.5,424.2 489.4,430 490,434.4 495,435 500.5,435.7 520,436.3 525,436.8 560,436.8 590,437 598,437.2 600,437 602,433 603.7,430.9 605,433 606.9,435.9 610,436 611,434 612.4,432.4 618.8,432.4 620,431 621.5,428 622.7,426.7 626,427 632,428.3 645,429 658.3,429.6 680,430.2 696.3,430.4 699.5,430.2 700.3,428 701,427.7 710,427.7 720,427.7"/>
<text x="323.96" y="535.55" font-size="16" fill="#222" textLength="9.19" lengthAdjust="spacingAndGlyphs">0</text>
<text x="315.09" y="491.33" font-size="16" fill="#222" textLength="18.05" lengthAdjust="spacingAndGlyphs">20</text>
<text x="315.54" y="447.11" font-size="16" fill="#222" textLength="17.59" lengthAdjust="spacingAndGlyphs">40</text>
<text x="315.07" y="402.89" font-size="16" fill="#222" textLength="18.07" lengthAdjust="spacingAndGlyphs">60</text>
<text x="315.21" y="358.67" font-size="16" fill="#222" textLength="17.93" lengthAdjust="spacingAndGlyphs">80</text>
<text x="307.95" y="314.45" font-size="16" fill="#222" textLength="25.14" lengthAdjust="spacingAndGlyphs">100</text>
<text x="338.61" y="554.4" font-size="16" fill="#222" textLength="9.19" lengthAdjust="spacingAndGlyphs">0</text>
<text x="408.22" y="554.4" font-size="16" fill="#222" textLength="27.47" lengthAdjust="spacingAndGlyphs">200</text>
<text x="487.51" y="554.4" font-size="16" fill="#222" textLength="27.01" lengthAdjust="spacingAndGlyphs">400</text>
<text x="565.88" y="554.4" font-size="16" fill="#222" textLength="27.49" lengthAdjust="spacingAndGlyphs">600</text>
<text x="644.86" y="554.4" font-size="16" fill="#222" textLength="27.35" lengthAdjust="spacingAndGlyphs">800</text>
<path d="M747.3 309.3 H774.6" stroke="#418cf0" stroke-width="2.8"/>
<path d="M747.3 326.9 H774.6" stroke="#fcb441" stroke-width="2.8"/>
<text x="780.6" y="315" font-size="14" fill="#222" textLength="28.3" lengthAdjust="spacingAndGlyphs">CPU</text>
<text x="781.2" y="332.5" font-size="14" fill="#222" textLength="28.6" lengthAdjust="spacingAndGlyphs">RAM</text>
</svg>
</body></html>
